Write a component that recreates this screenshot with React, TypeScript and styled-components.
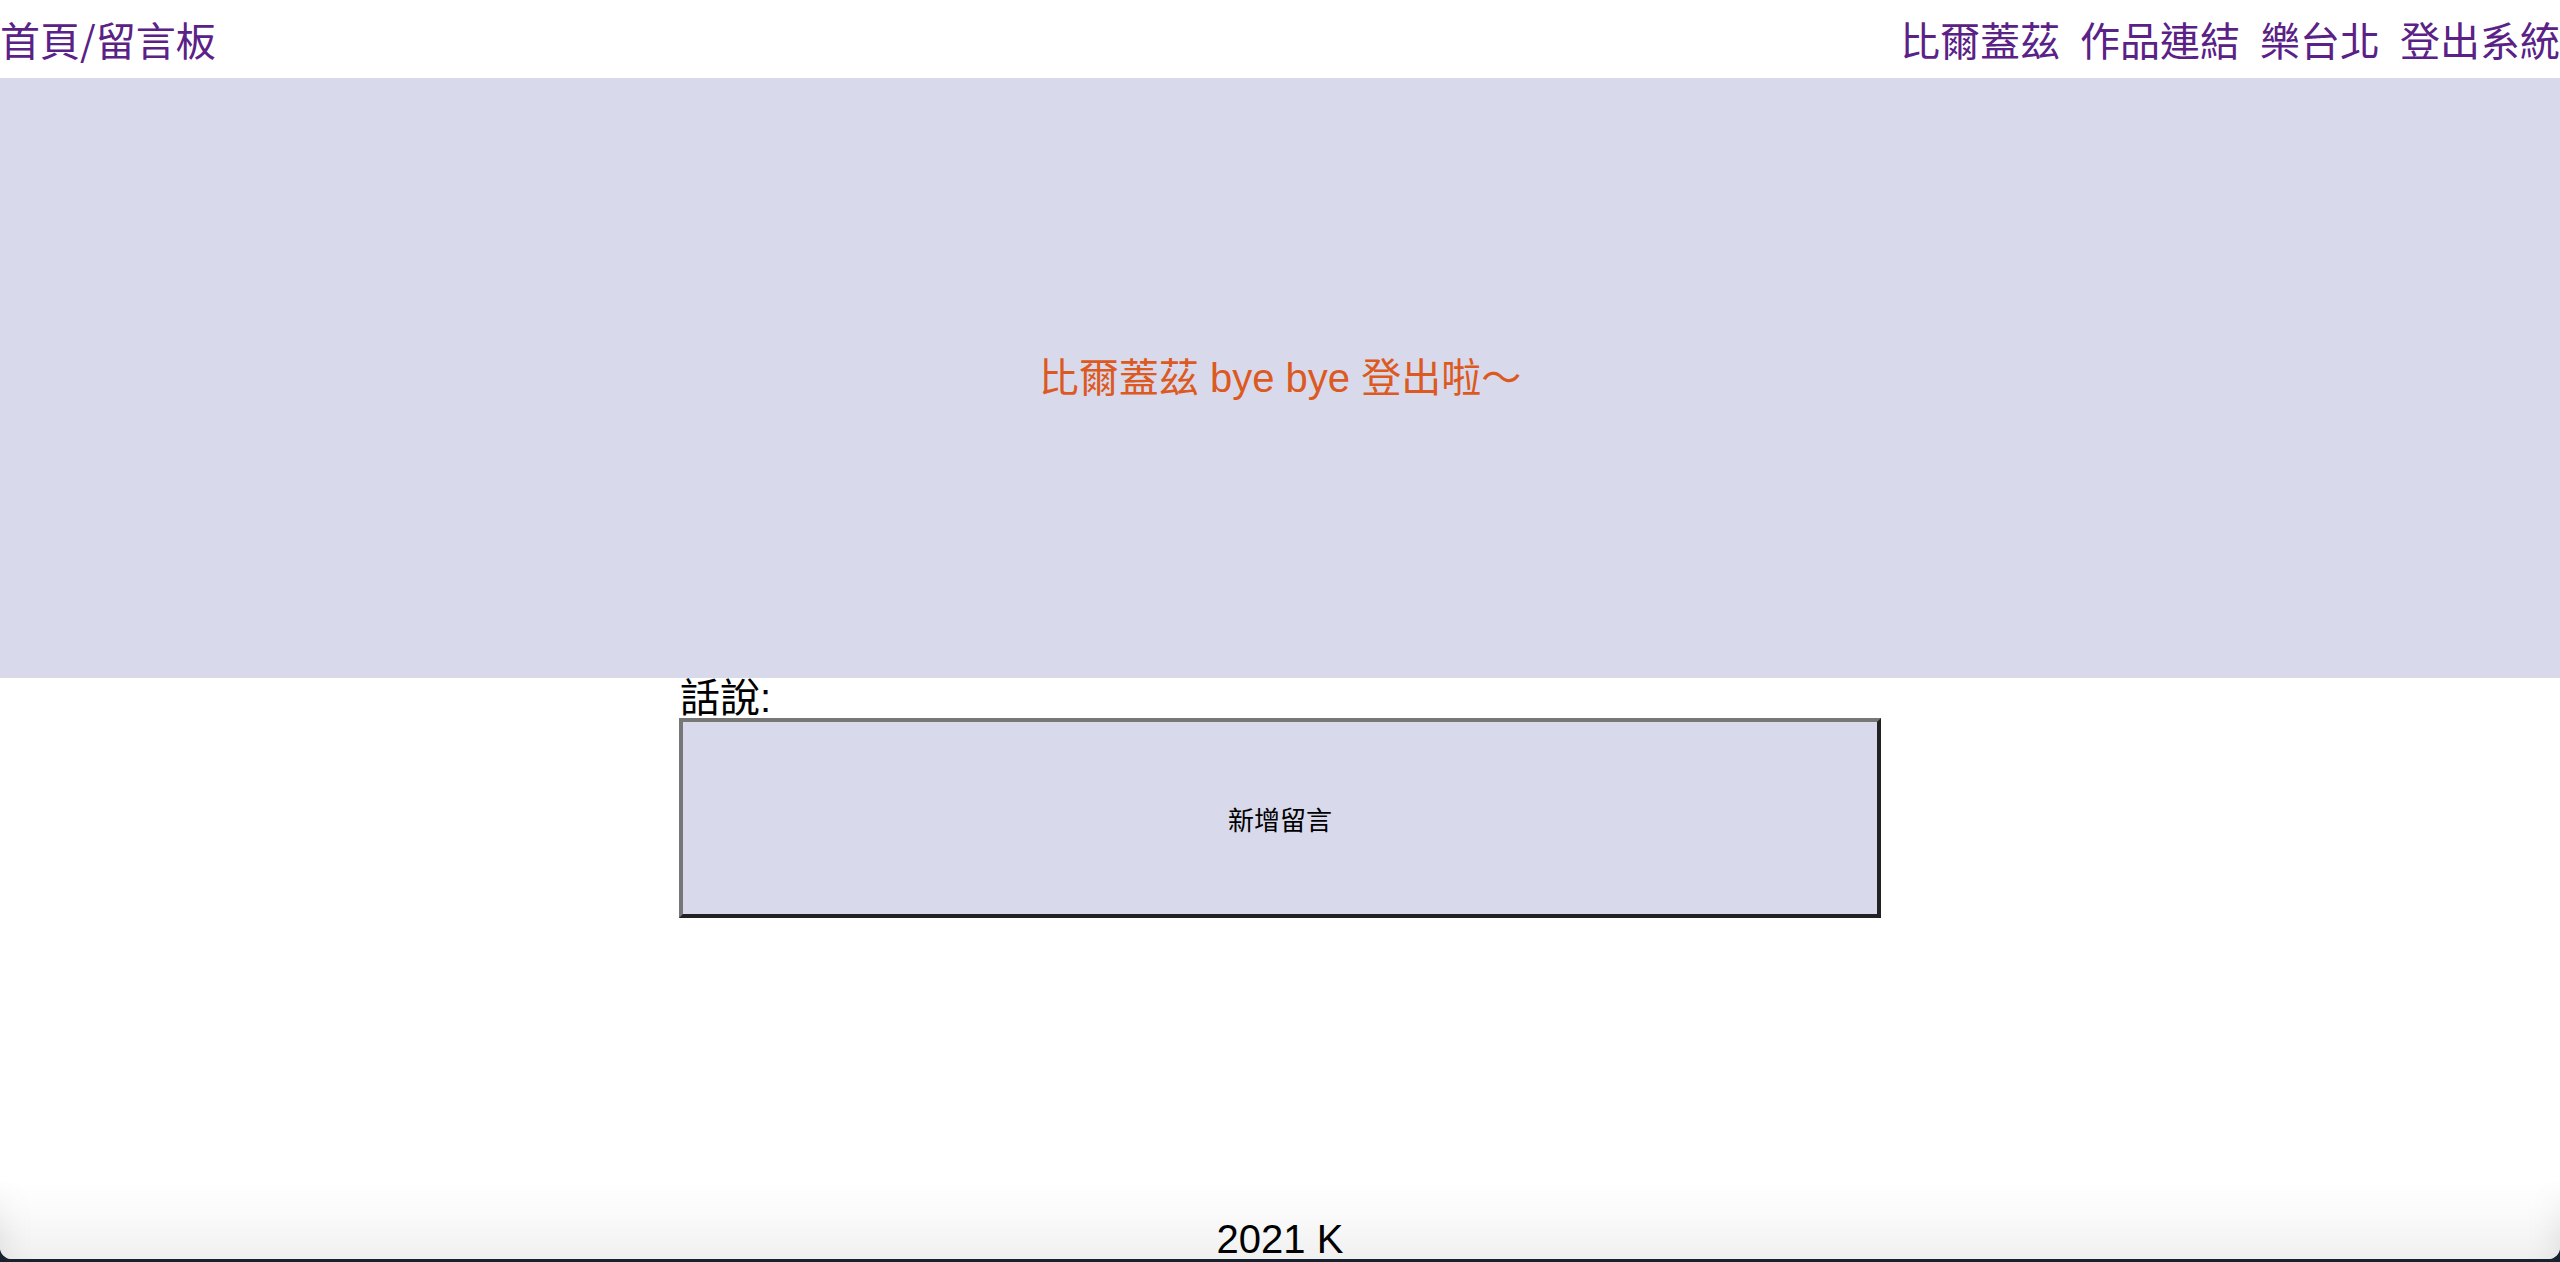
import React from "react";
import styled, { createGlobalStyle } from "styled-components";

const GlobalStyle = createGlobalStyle`
  html, body {
    margin: 0;
    padding: 0;
    background: #16232e;
  }
  body {
    font-family: "Liberation Sans", "Noto Sans CJK TC", sans-serif;
  }
  * { box-sizing: border-box; }
`;

const Page = styled.div`
  display: flex;
  flex-direction: column;
  height: 1259px;
  background: #ffffff;
  border-radius: 0 0 12px 12px;
  overflow: hidden;
`;

const Header = styled.header`
  display: flex;
  justify-content: space-between;
  align-items: center;
  height: 78px;
  background: #ffffff;
`;

const NavLink = styled.a`
  color: #5a2186;
  font-size: 40px;
  line-height: 48px;
  text-decoration: none;
  font-family: "Noto Sans CJK TC", "Liberation Sans", sans-serif;
`;

const Nav = styled.nav`
  display: flex;
  gap: 20px;
`;

const Hero = styled.section`
  display: flex;
  align-items: center;
  justify-content: center;
  height: 600px;
  background: #d8d9eb;
`;

const HeroText = styled.div`
  color: #dc5a22;
  font-size: 40px;
  line-height: 48px;
`;

const Main = styled.main`
  flex: 1;
  display: flex;
  flex-direction: column;
  align-items: center;
`;

const Board = styled.div`
  width: 1202px;
  display: flex;
  flex-direction: column;
`;

const Label = styled.div`
  font-size: 40px;
  line-height: 40px;
  color: #000;
  padding-left: 1px;
`;

const AddButton = styled.button`
  height: 200px;
  width: 100%;
  background: #d8d9eb;
  border-style: solid;
  border-width: 4px;
  border-color: #777777 #222222 #222222 #777777;
  font-family: "Liberation Sans", "Noto Sans CJK TC", sans-serif;
  font-size: 26px;
  color: #000;
  padding: 0;
  cursor: pointer;
`;

const Footer = styled.footer`
  position: relative;
  height: 79px;
  display: flex;
  align-items: flex-end;
  justify-content: center;
  padding-bottom: 2px;
  background: linear-gradient(to bottom, #ffffff 0%, #fbfbfb 40%, #f0f0f0 100%);

  &::before {
    content: "";
    position: absolute;
    inset: 0;
    pointer-events: none;
    box-shadow: inset 36px 0 36px -36px rgba(0, 0, 0, 0.1),
      inset -36px 0 36px -36px rgba(0, 0, 0, 0.1);
    -webkit-mask-image: linear-gradient(to bottom, transparent 0%, #000 70%);
    mask-image: linear-gradient(to bottom, transparent 0%, #000 70%);
  }
`;

const FooterText = styled.div`
  position: relative;
  font-size: 40px;
  line-height: 36px;
  color: #000;
`;

export default function App() {
  return (
    <>
      <GlobalStyle />
      <Page>
        <Header>
          <NavLink href="#">首頁/留言板</NavLink>
          <Nav>
            <NavLink href="#">比爾蓋茲</NavLink>
            <NavLink href="#">作品連結</NavLink>
            <NavLink href="#">樂台北</NavLink>
            <NavLink href="#">登出系統</NavLink>
          </Nav>
        </Header>
        <Hero>
          <HeroText>比爾蓋茲 bye bye 登出啦～</HeroText>
        </Hero>
        <Main>
          <Board>
            <Label>話說:</Label>
            <AddButton>新增留言</AddButton>
          </Board>
        </Main>
        <Footer>
          <FooterText>2021 K</FooterText>
        </Footer>
      </Page>
    </>
  );
}
